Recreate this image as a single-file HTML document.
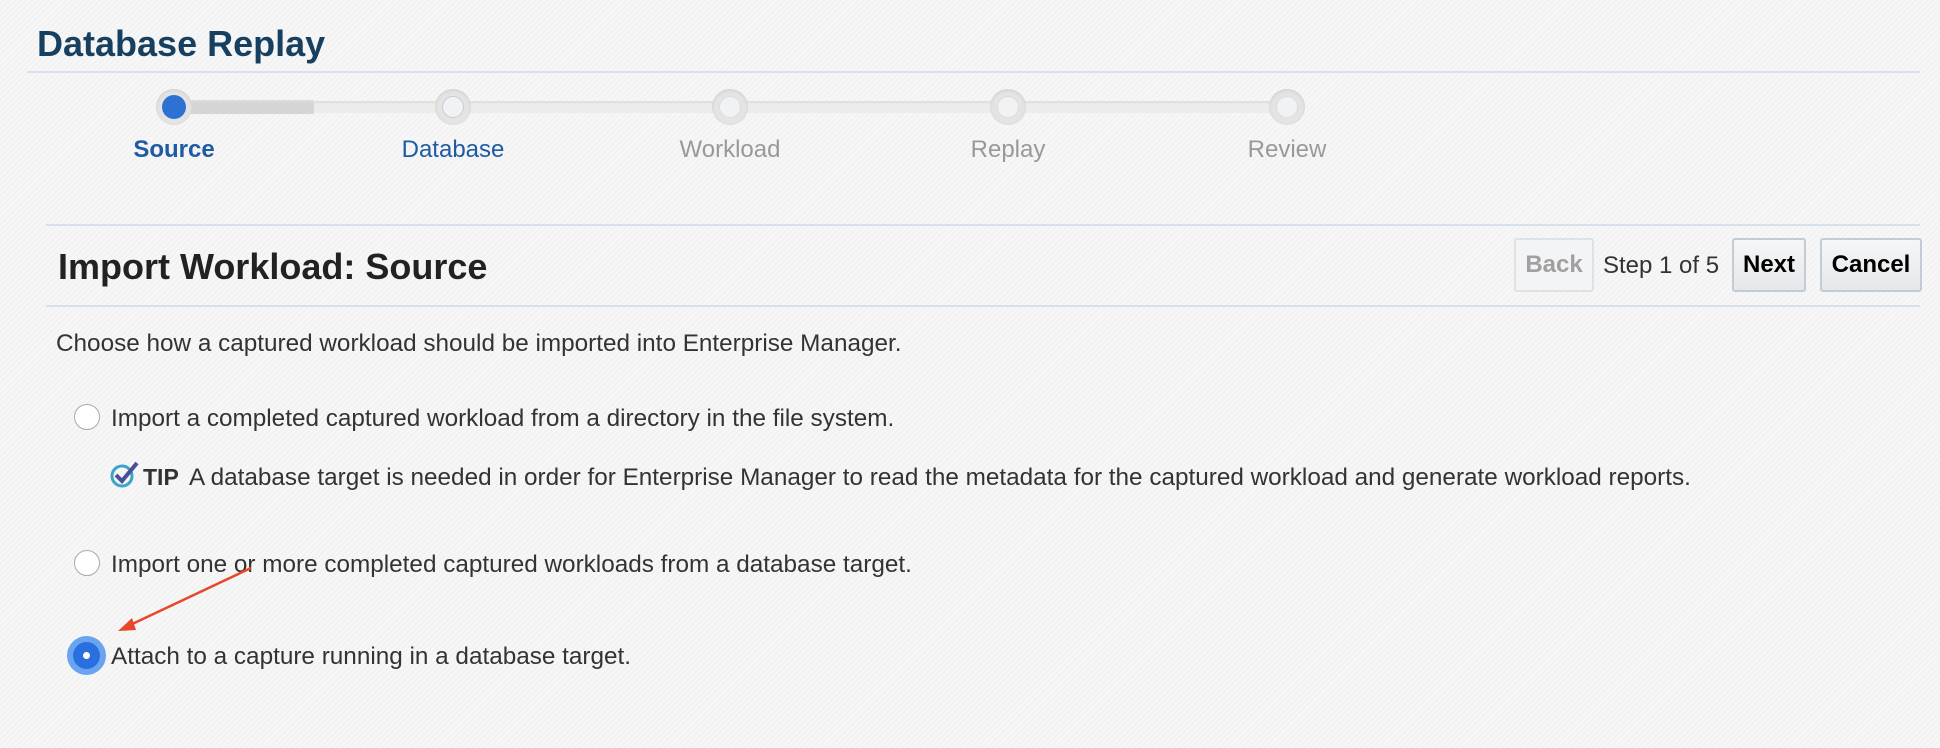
<!DOCTYPE html>
<html><head><meta charset="utf-8"><style>
html,body{margin:0;padding:0}
body{width:1940px;height:748px;overflow:hidden;position:relative;font-family:"Liberation Sans",Arial,sans-serif;
background:repeating-linear-gradient(135deg,#f7f7f7 0 2px,#f2f2f2 2px 4px);}
.a{position:absolute;white-space:nowrap}
.title{left:37px;top:23px;font-size:36px;font-weight:bold;color:#173f5f}
.hr{position:absolute;height:2px;background:#d8e1e9}
.track{position:absolute;top:101px;height:12px;background:#ececec;box-shadow:inset 0 2px 2px #ddd}
.c{position:absolute;width:36px;height:36px;border-radius:50%;background:#e4e4e4;box-shadow:inset 0 1px 3px #ccc}
.c i{position:absolute;left:7px;top:7px;width:22px;height:22px;border-radius:50%;background:#f0f2f4;border:1px solid #c4ccd6;box-sizing:border-box}
.lbl{font-size:24px;top:136px;transform:translateX(-50%)}
.btn{position:absolute;top:238px;height:54px;border:2px solid #c3ccd4;border-radius:3px;background:linear-gradient(#f5f6f7,#e5e8eb);box-sizing:border-box;font-size:24px;font-weight:bold;line-height:50px;text-align:center}
.txt{font-size:24.3px;color:#333}
.radio{position:absolute;width:26px;height:26px;border-radius:50%;border:1px solid #aaa;background:#fff;box-sizing:border-box}
</style></head><body>
<div class="a title">Database Replay</div>
<div class="hr" style="left:27px;width:1893px;top:71px"></div>

<div class="track" style="left:180px;width:1107px"></div>
<div class="track" style="left:180px;width:134px;background:#d5d5d5;top:100px;height:14px"></div>
<div class="c" style="left:156px;top:89px"><i style="left:6px;top:6px;width:24px;height:24px;background:#2d72d2;border:none"></i></div>
<div class="c" style="left:435px;top:89px"><i></i></div>
<div class="c" style="left:712px;top:89px"><i style="border-color:#ddd"></i></div>
<div class="c" style="left:990px;top:89px"><i style="border-color:#ddd"></i></div>
<div class="c" style="left:1269px;top:89px"><i style="border-color:#ddd"></i></div>
<div class="a lbl" style="left:174px;color:#1e5ba3;font-weight:bold">Source</div>
<div class="a lbl" style="left:453px;color:#1e5ba3">Database</div>
<div class="a lbl" style="left:730px;color:#999">Workload</div>
<div class="a lbl" style="left:1008px;color:#999">Replay</div>
<div class="a lbl" style="left:1287px;color:#999">Review</div>

<div class="hr" style="left:46px;width:1874px;top:224px"></div>
<div class="a" style="left:58px;top:246px;font-size:36px;font-weight:bold;color:#222">Import Workload: Source</div>
<div class="btn" style="left:1514px;width:80px;color:#a0a0a0;background:#f3f4f6;border-color:#dde2e7">Back</div>
<div class="a" style="left:1603px;top:252px;font-size:24px;color:#333">Step 1 of 5</div>
<div class="btn" style="left:1732px;width:74px;color:#000">Next</div>
<div class="btn" style="left:1820px;width:102px;color:#000">Cancel</div>
<div class="hr" style="left:46px;width:1874px;top:305px"></div>

<div class="a txt" style="left:56px;top:330px">Choose how a captured workload should be imported into Enterprise Manager.</div>
<div class="radio" style="left:74px;top:404px"></div>
<div class="a txt" style="left:111px;top:405px">Import a completed captured workload from a directory in the file system.</div>
<svg class="a" style="left:109px;top:460px" width="32" height="30" viewBox="0 0 32 30"><circle cx="13" cy="16" r="10" fill="none" stroke="#3ba5c8" stroke-width="3"/><path d="M7 15 L13 21 L28 3" fill="none" stroke="#4a4f9a" stroke-width="4"/></svg>
<div class="a" style="left:143px;top:464px;font-size:23px;font-weight:bold;color:#333">TIP</div>
<div class="a txt" style="left:189px;top:464px">A database target is needed in order for Enterprise Manager to read the metadata for the captured workload and generate workload reports.</div>
<div class="radio" style="left:74px;top:550px"></div>
<div class="a txt" style="left:111px;top:551px">Import one or more completed captured workloads from a database target.</div>
<div class="a" style="left:67px;top:636px;width:39px;height:39px;border-radius:50%;background:#6aa3f0"></div>
<div class="a" style="left:73px;top:642px;width:27px;height:27px;border-radius:50%;background:#2a6fe0"></div>
<div class="a" style="left:83px;top:652px;width:7px;height:7px;border-radius:50%;background:#fff"></div>
<div class="a txt" style="left:111px;top:643px">Attach to a capture running in a database target.</div>
<svg class="a" style="left:0;top:0" width="400" height="700"><path d="M251 568 L128 626" stroke="#e8472b" stroke-width="2.5"/><path d="M118 631 L132 618 L136 630 Z" fill="#e8472b"/></svg>
</body></html>
